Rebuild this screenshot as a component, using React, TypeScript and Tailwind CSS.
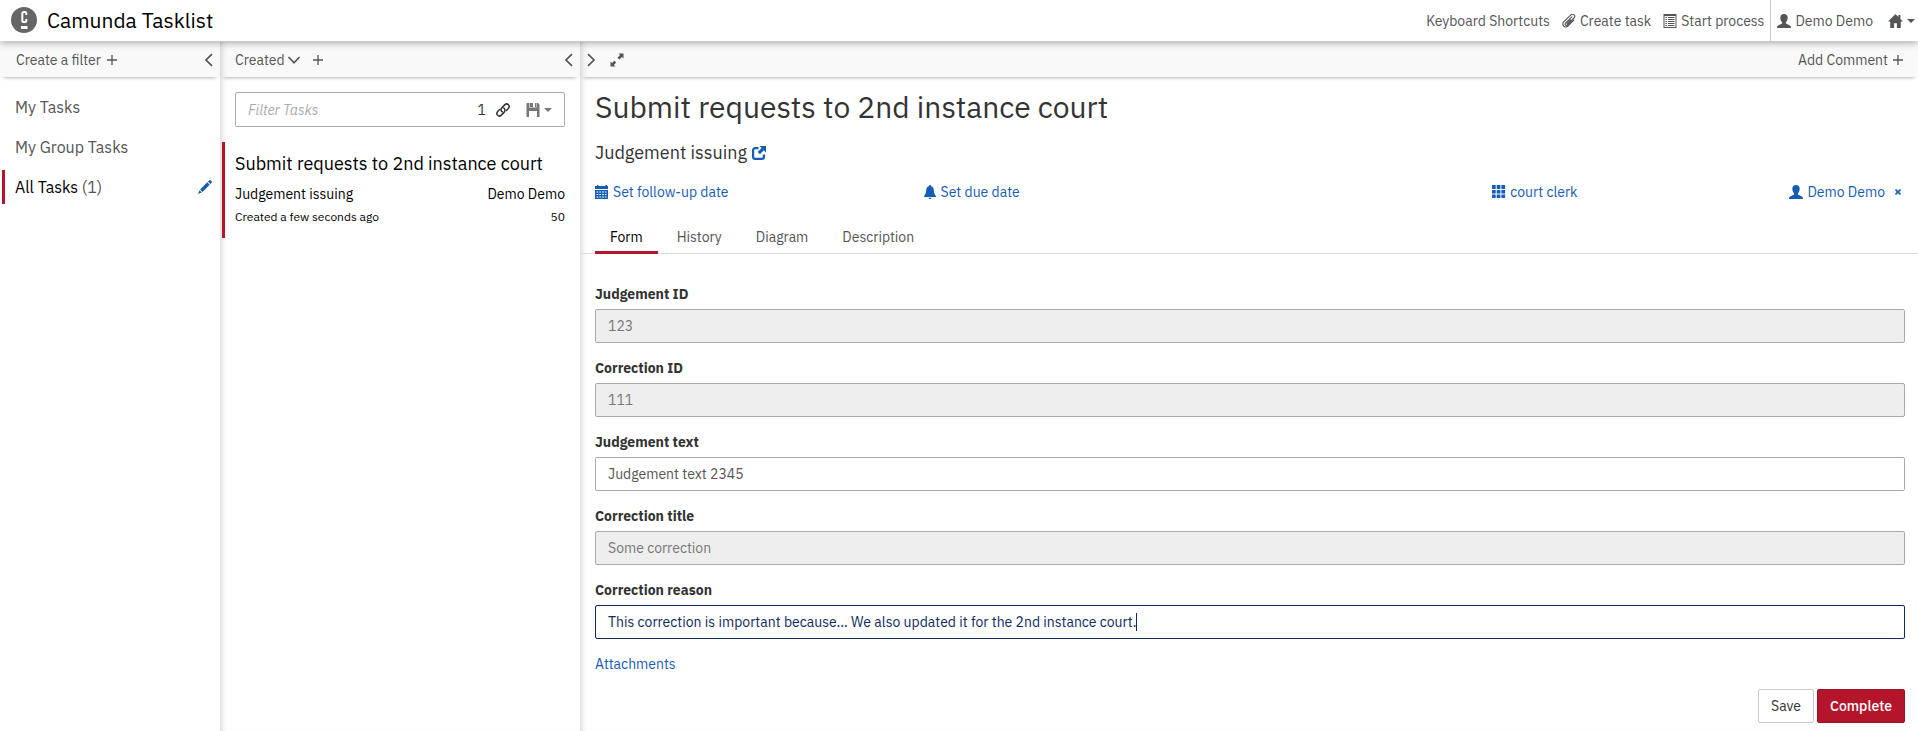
import { useState } from "react";
import type { ReactNode } from "react";

type IconProps = { className?: string };

function Glyph({ className = "", children }: { className?: string; children: ReactNode }) {
  return (
    <svg viewBox="0 0 14 14" fill="currentColor" aria-hidden="true" className={`size-3.5 shrink-0 ${className}`}>
      {children}
    </svg>
  );
}

const UserIcon = (p: IconProps) => (
  <Glyph {...p}>
    <path d="M7 0C4.600 0 3.300 1.300 3.300 3.800c0 1.900.8 3.600 1.800 4.400v1.300L1.500 11.200C.4 11.700 0 12.400 0 14h14c0-1.600-.4-2.300-1.500-2.800L8.900 9.500V8.200c1-.8 1.800-2.500 1.800-4.400C10.700 1.300 9.400 0 7 0z" />
  </Glyph>
);

const HomeIcon = () => (
  <svg viewBox="0 0 15 14" fill="currentColor" aria-hidden="true" className="h-3.5 w-[15px] shrink-0">
    <path d="M7.500 0 0 7.600h2.200V14h3.900V9.200h2.800V14h3.900V7.600H15L12.400 5V1h-2v2L7.500 0z" />
  </svg>
);

const ListIcon = (p: IconProps) => (
  <Glyph {...p}>
    <path fillRule="evenodd" d="M.5 0h13v14H.5V0zm1 2v11h11V2h-11z" />
    <path d="M2.500 3H4v1H2.500zM5 3h6.500v1H5zM2.500 5H4v1H2.500zM5 5h6.500v1H5zM2.500 7H4v1H2.500zM5 7h6.500v1H5zM2.500 9H4v1H2.500zM5 9h6.500v1H5zM2.500 11H4v1H2.500zM5 11h6.500v1H5z" />
  </Glyph>
);

const PaperclipIcon = (p: IconProps) => (
  <Glyph {...p}>
    <path
      fill="none"
      stroke="currentColor"
      strokeWidth="1.100"
      strokeLinecap="round"
      d="M9.800 2.900 3.600 9.100c-1.300 1.400.4 3 1.700 1.700l6.300-6.300c2.900-2.900-.5-5.900-3-3.400L1.700 7.900C-.9 10.600 3 14.900 5.900 12l5.900-5.900M8.600 5.900l-3.500 3.500"
    />
  </Glyph>
);

const PencilIcon = (p: IconProps) => (
  <Glyph {...p}>
    <path d="M11.200.4c.5-.5 1-.5 1.500 0l.9.9c.5.5.5 1 0 1.500l-1.200 1.200L10 1.600 11.200.4zM9.300 2.300l2.400 2.400-7.200 7.200-2.400-2.400 7.200-7.200zM1.500 10.300l2.200 2.200L0 14l1.500-3.700z" />
  </Glyph>
);

const CalendarIcon = (p: IconProps) => (
  <Glyph {...p}>
    <path
      fillRule="evenodd"
      d="M2 0h1.500v1h7V0H12v1h1v3H0V1h2V0zM0 5h13v9H0V5zm1.500 1.500v1h1.800v-1H1.500zm2.800 0v1h1.800v-1H4.300zm2.800 0v1h1.800v-1H7.100zm2.800 0v1h1.600v-1H9.900zM1.500 9v1h1.800V9H1.500zm2.800 0v1h1.800V9H4.300zm2.800 0v1h1.800V9H7.100zm2.800 0v1h1.600V9H9.900zM1.500 11.500v1h1.800v-1H1.500zm2.800 0v1h1.800v-1H4.300zm2.800 0v1h1.800v-1H7.100zm2.800 0v1h1.600v-1H9.900z"
    />
  </Glyph>
);

const BellIcon = (p: IconProps) => (
  <Glyph {...p}>
    <path d="M7 0c.7 0 1.100.5 1.100 1.200C10 1.800 10.700 3.300 10.800 5c.1 2.500.6 4 1.700 5.500.4.5.5.9.5 1.500H1c0-.6.1-1 .5-1.500C2.600 9 3.100 7.500 3.200 5c.1-1.700.8-3.200 2.700-3.800C5.900.5 6.300 0 7 0zM5.500 12.700h3c-.1.8-.7 1.300-1.500 1.300s-1.400-.5-1.500-1.300z" />
  </Glyph>
);

const GridIcon = (p: IconProps) => (
  <Glyph {...p}>
    <path d="M0 0h3.700v4H0zM4.700 0h3.700v4H4.700zM9.400 0h3.700v4H9.400zM0 5h3.700v3.500H0zM4.700 5h3.700v3.500H4.700zM9.400 5h3.700v3.500H9.400zM0 9.500h3.700V13H0zM4.700 9.500h3.700V13H4.700zM9.400 9.500h3.700V13H9.400z" />
  </Glyph>
);

const ShareIcon = (p: IconProps) => (
  <Glyph {...p}>
    <path d="M7.500 0H14v6.500l-2.200-2.200-3.900 3.900-2.200-2.200 3.900-3.900L7.500 0z" />
    <path
      fill="none"
      stroke="currentColor"
      strokeWidth="2.200"
      d="M6.500 2.100H3.300c-1.400 0-2.200.8-2.200 2.200v6.400c0 1.400.8 2.200 2.200 2.200h6.400c1.400 0 2.200-.8 2.200-2.200V8.500"
    />
  </Glyph>
);

const SaveIcon = (p: IconProps) => (
  <Glyph {...p}>
    <path d="M.5 0H3v4.600h7.500V0H12l1.500 1.500V14H11V8H3v6H.5z" />
    <path d="M3.600 0H7v4.100H3.600zM9 0h1v4.100H9z" />
  </Glyph>
);

const LinkIcon = (p: IconProps) => (
  <Glyph {...p}>
    <g fill="none" stroke="currentColor" strokeWidth="1.500" strokeLinecap="round">
      <path d="M6.200 8.800C4.700 7.800 4.700 6 5.800 4.900l2.900-3c2.600-2.500 5.900.8 3.600 3.500l-1.900 2" />
      <path d="M7.800 5.200c1.500 1 1.500 2.800.4 3.900l-2.900 3c-2.600 2.500-5.900-.8-3.600-3.500l1.900-2" />
    </g>
  </Glyph>
);

const ResizeIcon = (p: IconProps) => (
  <Glyph {...p}>
    <path d="M8.500.5h5v5l-1.600-1.600-2.600 2.600-1.800-1.800 2.600-2.600L8.500.5zM.5 8.500l1.600 1.600 2.300-2.300 1.800 1.800-2.300 2.300 1.600 1.600h-5v-5z" />
  </Glyph>
);

const PlusIcon = ({ className = "" }: IconProps) => (
  <svg viewBox="0 0 10 10" aria-hidden="true" className={`size-2.5 shrink-0 ${className}`}>
    <path fill="none" stroke="currentColor" strokeWidth="1.300" d="M5 0v10M0 5h10" />
  </svg>
);

function Chevron({ dir }: { dir: "left" | "right" | "down" }) {
  const d = { left: "M10 1.200 4 7l6 5.800", right: "M4 1.200 10 7l-6 5.800", down: "M1.500 4 7 9.800 12.500 4" }[dir];
  return (
    <Glyph>
      <path fill="none" stroke="currentColor" strokeWidth="1.700" d={d} />
    </Glyph>
  );
}

const Caret = () => (
  <svg viewBox="0 0 8 4" fill="currentColor" aria-hidden="true" className="h-1 w-2 shrink-0">
    <path d="M0 0h8L4 4z" />
  </svg>
);

const Logo = () => (
  <svg viewBox="0 0 26 26" aria-hidden="true" className="size-[26px] shrink-0">
    <circle cx="13" cy="13" r="13" fill="#666" />
    <path
      fill="none"
      stroke="#fff"
      strokeWidth="2"
      d="M15.300 8V6.500c0-1-.6-1.600-1.600-1.600h-.8c-1 0-1.600.6-1.600 1.600v7c0 1 .6 1.600 1.600 1.600h.8c1 0 1.600-.6 1.600-1.600V12"
    />
    <path fill="#fff" d="M10 19h6.500v3H10z" />
  </svg>
);

function Strip({ children }: { children: ReactNode }) {
  return (
    <div className="flex h-[35px] shrink-0 items-center bg-black/[.025] text-sm text-[#555] shadow-[0_4px_4px_-4px_rgba(0,0,0,0.45)]">
      {children}
    </div>
  );
}

const panelEdge = "shadow-[inset_7px_0_7px_-6px_rgba(0,0,0,0.2)]";

type Field = { id: string; label: string; value: string; disabled?: boolean };

const fields: Field[] = [
  { id: "judgement-id", label: "Judgement ID", value: "123", disabled: true },
  { id: "correction-id", label: "Correction ID", value: "111", disabled: true },
  { id: "judgement-text", label: "Judgement text", value: "Judgement text 2345" },
  { id: "correction-title", label: "Correction title", value: "Some correction", disabled: true },
  {
    id: "correction-reason",
    label: "Correction reason",
    value: "This correction is important because... We also updated it for the 2nd instance court.",
  },
];

const editingId = "correction-reason";

function FormField({ field }: { field: Field }) {
  const [value, setValue] = useState(field.value);
  const editing = field.id === editingId;
  return (
    <div className="mb-[15px]">
      <label htmlFor={field.id} className="mb-[5px] block w-fit text-sm leading-5 font-bold text-[#333]">
        {field.label}
      </label>
      <div className="relative">
        <input
          id={field.id}
          type="text"
          value={value}
          disabled={field.disabled}
          autoFocus={editing}
          onChange={(e) => setValue(e.target.value)}
          className="block h-[34px] w-full rounded-xs border border-[#aaa] bg-white px-3 text-sm text-[#555] caret-transparent outline-none focus:border-[#0e2a5e] focus:text-[#0e2a5e] disabled:bg-[#eee] disabled:text-[#777]"
        />
        {editing && <span aria-hidden="true" className="absolute top-2 left-[541px] h-[18px] w-px bg-[#0e2a5e]" />}
      </div>
    </div>
  );
}

function Header() {
  return (
    <header className="relative z-10 flex h-[41px] shrink-0 items-center bg-white pl-[11px] text-sm text-[#555] shadow-[0_1px_8px_rgba(0,0,0,0.4)]">
      <a href="#home" className="flex items-center gap-2.5 pb-0.5 text-[21px] text-black">
        <Logo />
        Camunda Tasklist
      </a>
      <nav className="ml-auto flex h-full items-center">
        <a href="#shortcuts">Keyboard Shortcuts</a>
        <a href="#create" className="ml-3 flex items-center gap-1">
          <PaperclipIcon />
          Create task
        </a>
        <a href="#start" className="ml-3 flex items-center gap-1">
          <ListIcon />
          Start process
        </a>
        <a href="#user" className="ml-1.5 flex h-full items-center gap-1 border-l border-[#ccc] pl-1.5">
          <UserIcon />
          Demo Demo
        </a>
        <button type="button" aria-label="Apps" className="mr-[3px] ml-[15px] flex items-center gap-1">
          <HomeIcon />
          <Caret />
        </button>
      </nav>
    </header>
  );
}

function Filters() {
  return (
    <aside className="flex w-[220px] shrink-0 flex-col">
      <Strip>
        <button type="button" className="ml-4 flex items-center gap-1.5">
          Create a filter
          <PlusIcon />
        </button>
        <button type="button" aria-label="Collapse filters" className="mr-1 ml-auto">
          <Chevron dir="left" />
        </button>
      </Strip>
      <ul className="mt-[13px] ml-0.5 flex flex-col gap-1.5 pr-2 text-base text-[#555]">
        <li className="flex h-[34px] items-center pl-[13px]">
          <a href="#my">My Tasks</a>
        </li>
        <li className="flex h-[34px] items-center pl-[13px]">
          <a href="#group">My Group Tasks</a>
        </li>
        <li className="flex h-[34px] items-center border-l-3 border-[#b5152b] pl-2.5">
          <a href="#all">
            <span className="text-black">All Tasks</span> (1)
          </a>
          <button type="button" aria-label="Edit filter" className="ml-auto text-[#155cb5]">
            <PencilIcon />
          </button>
        </li>
      </ul>
    </aside>
  );
}

function Tasks() {
  return (
    <section className={`flex w-[360px] shrink-0 flex-col ${panelEdge}`}>
      <Strip>
        <button type="button" className="ml-[15px] flex items-center gap-0.5">
          Created
          <Chevron dir="down" />
        </button>
        <button type="button" aria-label="Add sorting" className="ml-3">
          <PlusIcon />
        </button>
        <button type="button" aria-label="Collapse tasks" className="mr-1 ml-auto">
          <Chevron dir="left" />
        </button>
      </Strip>
      <div className="mx-[15px] mt-[15px] flex h-[35px] items-center rounded-xs border border-[#aaa] bg-white pr-3 pl-3 text-[#333]">
        <input
          aria-label="Filter Tasks"
          placeholder="Filter Tasks"
          className="min-w-0 flex-1 text-sm outline-none placeholder:text-[#aaa] placeholder:italic"
        />
        <span className="text-sm">1</span>
        <button type="button" aria-label="Copy link" className="ml-2.5">
          <LinkIcon />
        </button>
        <button type="button" aria-label="Save search" className="ml-4 flex items-center gap-1 text-[#777]">
          <SaveIcon />
          <Caret />
        </button>
      </div>
      <a href="#task" className="mt-[15px] ml-0.5 flex h-24 flex-col border-l-3 border-[#b5152b] pt-2 pr-[15px] pl-2.5 text-black">
        <h4 className="text-lg leading-7">Submit requests to 2nd instance court</h4>
        <span className="mt-1.5 flex justify-between text-sm leading-5">
          <span>Judgement issuing</span>
          <span>Demo Demo</span>
        </span>
        <span className="mt-[5px] flex justify-between text-xs leading-4">
          <span>Created a few seconds ago</span>
          <span>50</span>
        </span>
      </a>
    </section>
  );
}

const tabs = ["Form", "History", "Diagram", "Description"];

function Detail() {
  return (
    <main className={`flex min-w-0 flex-1 flex-col ${panelEdge}`}>
      <Strip>
        <button type="button" aria-label="Expand tasks" className="ml-1">
          <Chevron dir="right" />
        </button>
        <button type="button" aria-label="Maximize" className="ml-3">
          <ResizeIcon />
        </button>
        <button type="button" className="mr-[15px] ml-auto flex items-center gap-[5px]">
          Add Comment
          <PlusIcon />
        </button>
      </Strip>
      <div className="pr-[13px] pl-[15px] text-[#333]">
        <h2 className="mt-3 text-3xl leading-9">Submit requests to 2nd instance court</h2>
        <h3 className="mt-4 flex items-center gap-[5px] text-lg leading-6">
          Judgement issuing
          <a href="#process" aria-label="Open process" className="text-[#155cb5]">
            <ShareIcon />
          </a>
        </h3>
        <div className="mt-[17px] grid grid-cols-4 text-sm leading-5 text-[#155cb5]">
          <button type="button" className="flex items-center gap-1">
            <CalendarIcon />
            Set follow-up date
          </button>
          <button type="button" className="flex items-center gap-1">
            <BellIcon />
            Set due date
          </button>
          <button type="button" className="flex items-center justify-end gap-1">
            <GridIcon />
            court clerk
          </button>
          <div className="flex items-center justify-end">
            <button type="button" className="flex items-center gap-1">
              <UserIcon />
              Demo Demo
            </button>
            <button type="button" aria-label="Reset assignee" className="mr-1 ml-2.5">
              <svg viewBox="0 0 6 6" aria-hidden="true" className="size-1.5">
                <path stroke="currentColor" strokeWidth="1.600" d="m.5.5 5 5m0-5-5 5" />
              </svg>
            </button>
          </div>
        </div>
      </div>
      <div role="tablist" className="mt-[19px] flex gap-1 border-b border-[#ddd] pl-[15px] text-sm leading-5 text-[#555]">
        {tabs.map((tab, i) => (
          <button
            key={tab}
            type="button"
            role="tab"
            aria-selected={i === 0}
            className="-mb-px border-b-3 border-transparent px-[15px] pt-1.5 pb-1 aria-selected:border-[#b5152b] aria-selected:text-black"
          >
            {tab}
          </button>
        ))}
      </div>
      <form className="mt-[30px] pr-[13px] pl-[15px]" onSubmit={(e) => e.preventDefault()}>
        {fields.map((field) => (
          <FormField key={field.id} field={field} />
        ))}
        <a href="#attachments" className="block w-fit text-sm leading-5 text-[#155cb5]">
          Attachments
        </a>
        <div className="mt-[15px] flex justify-end gap-[3px] text-sm">
          <button type="button" className="h-[34px] rounded-xs border border-[#ccc] bg-white px-3 text-[#333]">
            Save
          </button>
          <button type="submit" className="h-[34px] rounded-xs border border-[#a01226] bg-[#b5152b] px-3 font-medium text-white">
            Complete
          </button>
        </div>
      </form>
    </main>
  );
}

export default function App() {
  return (
    <div className="flex min-h-screen flex-col bg-white font-['IBM_Plex_Sans',Roboto,'Liberation_Sans',sans-serif]">
      <Header />
      <div className="flex flex-1 pt-px">
        <Filters />
        <Tasks />
        <Detail />
      </div>
    </div>
  );
}
